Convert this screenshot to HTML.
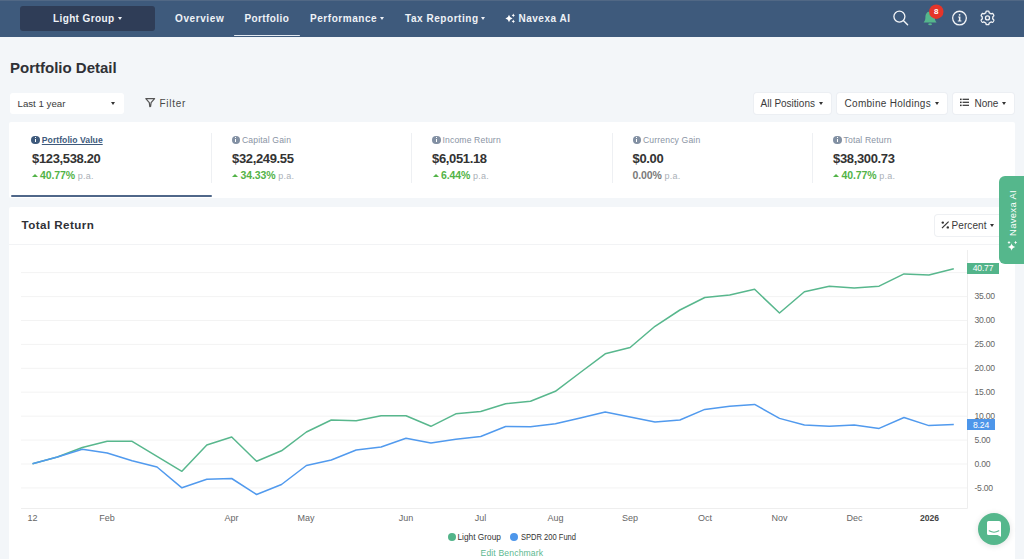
<!DOCTYPE html>
<html><head><meta charset="utf-8">
<style>
*{box-sizing:border-box;margin:0;padding:0}
html,body{width:1024px;height:559px;overflow:hidden;background:#f3f6f9;font-family:"Liberation Sans",sans-serif;position:relative}
.abs{position:absolute;white-space:nowrap}
.nav{position:absolute;left:0;top:0;width:1024px;height:37px;background:#3e5a7c;box-shadow:inset 0 1px 0 #516885}
.brand{position:absolute;left:20px;top:6px;width:135px;height:25px;background:#2f3d57;border-radius:3px}
.nl{position:absolute;top:0;height:37px;line-height:37px;color:#eef2f7;font-weight:bold;font-size:10px;letter-spacing:0.6px;white-space:nowrap}
.car{position:absolute;width:0;height:0;border-left:2.5px solid transparent;border-right:2.5px solid transparent;border-top:3px solid currentColor}
.uline{position:absolute;left:234px;top:34.5px;width:66px;height:1.75px;background:#e3e9f1;border-radius:1px}
.btn{position:absolute;background:#fff;border-radius:3px;box-shadow:0 0 0 1px #eceff3}
.t10{position:absolute;font-size:10px;color:#3a3a3a;white-space:nowrap}
.card{position:absolute;background:#fff;border-radius:2px}
.st{position:absolute;top:134.5px;font-size:8.6px;color:#8a94a4;white-space:nowrap;letter-spacing:0.15px}
.sv{position:absolute;top:151px;font-size:13px;font-weight:bold;color:#333;white-space:nowrap;letter-spacing:-0.35px}
.sp{position:absolute;top:169px;font-size:10.5px;font-weight:bold;color:#52b347;white-space:nowrap;letter-spacing:-0.1px}
.sp span{font-weight:normal;color:#aab0b7;font-size:9px;letter-spacing:0.2px}
.ic{position:absolute;top:135.5px;width:8.5px;height:8.5px;border-radius:50%;background:#8290a3}
.ic:after{content:"";position:absolute;left:3.6px;top:3.3px;width:1.4px;height:3.3px;background:#fff}
.ic:before{content:"";position:absolute;left:3.6px;top:1.5px;width:1.4px;height:1.2px;background:#fff}
.tri{position:absolute;top:173.5px;width:0;height:0;border-left:3px solid transparent;border-right:3px solid transparent;border-bottom:3px solid #52b347}
.vsep{position:absolute;top:133px;width:1px;height:50px;background:#eef0f3}
svg.chart{position:absolute;left:0;top:0}
</style></head><body>
<div class="nav">
  <div class="brand"></div>
  <div class="nl" style="left:53px;letter-spacing:0.38px">Light Group</div>
  <i class="car" style="left:117.5px;top:17px;color:#eef2f7"></i>
  <div class="nl" style="left:175px">Overview</div>
  <div class="nl" style="left:244.5px;letter-spacing:0.4px">Portfolio</div>
  <div class="nl" style="left:310px;letter-spacing:0.55px">Performance</div>
  <i class="car" style="left:380px;top:17px;color:#eef2f7"></i>
  <div class="nl" style="left:405px;letter-spacing:0.55px">Tax Reporting</div>
  <i class="car" style="left:481px;top:17px;color:#eef2f7"></i>
  <svg class="abs" style="left:504px;top:12px" width="14" height="13" viewBox="0 0 14 13">
    <path d="M5,2.8 Q5.6,5.9 8.6,6.5 Q5.6,7.1 5,10.2 Q4.4,7.1 1.4,6.5 Q4.4,5.9 5,2.8Z" fill="#fff"/>
    <path d="M9.3,1.6 Q9.6,3.1 11,3.4 Q9.6,3.7 9.3,5.2 Q9,3.7 7.6,3.4 Q9,3.1 9.3,1.6Z" fill="#fff"/>
    <path d="M9.3,7.6 Q9.6,9.1 11,9.4 Q9.6,9.7 9.3,11.2 Q9,9.7 7.6,9.4 Q9,9.1 9.3,7.6Z" fill="#fff"/>
  </svg>
  <div class="nl" style="left:518.5px;letter-spacing:0.5px">Navexa AI</div>
  <div class="uline"></div>
  <svg class="abs" style="left:880px;top:0" width="144" height="37" viewBox="880 0 144 37">
    <circle cx="899.4" cy="16.6" r="5.5" fill="none" stroke="#f2f4f7" stroke-width="1.3"/>
    <path d="M903.6,20.8 L907.6,24.8" stroke="#f2f4f7" stroke-width="1.4" stroke-linecap="round"/>
    <path d="M930.1,11.5 C926.6,11.5 925.4,14.5 925.4,17.5 C925.4,20 924.6,21.4 923.6,22.5 L936.6,22.5 C935.6,21.4 934.8,20 934.8,17.5 C934.8,14.5 933.6,11.5 930.1,11.5Z" fill="#55b78c"/>
    <ellipse cx="930.1" cy="24.3" rx="1.9" ry="1" fill="#55b78c"/>
    <circle cx="936.3" cy="11.7" r="7.2" fill="#e5352a"/>
    <text x="936.3" y="13.9" text-anchor="middle" font-family="Liberation Sans, sans-serif" font-size="8" font-weight="bold" fill="#fff">8</text>
    <circle cx="959.5" cy="18.1" r="6.85" fill="none" stroke="#f2f4f7" stroke-width="1.3"/>
    <circle cx="959.6" cy="14.8" r="0.85" fill="#f2f4f7"/>
    <path d="M958.2,16.6 L960.4,16.6 L960.4,20.6 L961.4,20.6 L961.4,21.4 L957.8,21.4 L957.8,20.6 L958.9,20.6 L958.9,17.4 L958.2,17.4Z" fill="#f2f4f7"/>
    <path transform="translate(987.5,17.9)" d="M5.30,0.00 L5.29,0.28 L5.27,0.55 L5.23,0.83 L5.33,1.13 L5.84,1.57 L6.33,2.06 L6.35,2.44 L6.21,2.77 L6.06,3.09 L5.89,3.40 L5.70,3.70 L5.50,4.00 L5.28,4.28 L4.94,4.45 L4.28,4.28 L3.65,4.05 L3.34,4.12 L3.12,4.29 L2.89,4.44 L2.65,4.59 L2.41,4.72 L2.16,4.84 L1.90,4.95 L1.68,5.18 L1.57,5.84 L1.38,6.51 L1.06,6.72 L0.71,6.76 L0.36,6.79 L0.00,6.80 L-0.36,6.79 L-0.71,6.76 L-1.06,6.72 L-1.38,6.51 L-1.57,5.84 L-1.68,5.18 L-1.90,4.95 L-2.16,4.84 L-2.41,4.72 L-2.65,4.59 L-2.89,4.44 L-3.12,4.29 L-3.34,4.12 L-3.65,4.05 L-4.28,4.28 L-4.94,4.45 L-5.28,4.28 L-5.50,4.00 L-5.70,3.70 L-5.89,3.40 L-6.06,3.09 L-6.21,2.77 L-6.35,2.44 L-6.33,2.06 L-5.84,1.57 L-5.33,1.13 L-5.23,0.83 L-5.27,0.55 L-5.29,0.28 L-5.30,0.00 L-5.29,-0.28 L-5.27,-0.55 L-5.23,-0.83 L-5.33,-1.13 L-5.84,-1.57 L-6.33,-2.06 L-6.35,-2.44 L-6.21,-2.77 L-6.06,-3.09 L-5.89,-3.40 L-5.70,-3.70 L-5.50,-4.00 L-5.28,-4.28 L-4.94,-4.45 L-4.28,-4.28 L-3.65,-4.05 L-3.34,-4.12 L-3.12,-4.29 L-2.89,-4.44 L-2.65,-4.59 L-2.41,-4.72 L-2.16,-4.84 L-1.90,-4.95 L-1.68,-5.18 L-1.57,-5.84 L-1.38,-6.51 L-1.06,-6.72 L-0.71,-6.76 L-0.36,-6.79 L-0.00,-6.80 L0.36,-6.79 L0.71,-6.76 L1.06,-6.72 L1.38,-6.51 L1.57,-5.84 L1.68,-5.18 L1.90,-4.95 L2.16,-4.84 L2.41,-4.72 L2.65,-4.59 L2.89,-4.44 L3.12,-4.29 L3.34,-4.12 L3.65,-4.05 L4.28,-4.28 L4.94,-4.45 L5.28,-4.28 L5.50,-4.00 L5.70,-3.70 L5.89,-3.40 L6.06,-3.09 L6.21,-2.77 L6.35,-2.44 L6.33,-2.06 L5.84,-1.57 L5.33,-1.13 L5.23,-0.83 L5.27,-0.55 L5.29,-0.28Z" fill="none" stroke="#f2f4f7" stroke-width="1.3" stroke-linejoin="round"/>
    <circle cx="987.5" cy="17.9" r="2" fill="none" stroke="#f2f4f7" stroke-width="1.3"/>
  </svg>
</div>
<div class="abs" style="left:10px;top:58.5px;font-size:15px;font-weight:bold;color:#2f3136">Portfolio Detail</div>

<div class="btn" style="left:10px;top:93px;width:114px;height:21px;box-shadow:none"></div>
<div class="t10" style="left:17.5px;top:97.5px;font-size:9.7px">Last 1 year</div>
<i class="car" style="left:111px;top:102px;color:#333"></i>

<svg class="abs" style="left:144px;top:97px" width="12" height="11" viewBox="0 0 12 11"><path d="M1.8,1.6 L10.6,1.6 L7.1,5.6 L6.6,9.4 L5.8,9.6 L5.3,5.6Z" fill="none" stroke="#555" stroke-width="1.2" stroke-linejoin="round"/></svg>
<div class="t10" style="left:159.5px;top:97.5px;letter-spacing:0.7px;color:#484848">Filter</div>

<div class="btn" style="left:753.5px;top:93px;width:77px;height:21px"></div>
<div class="t10" style="left:760.5px;top:97.5px">All Positions</div>
<i class="car" style="left:819px;top:102px;color:#333"></i>
<div class="btn" style="left:837px;top:93px;width:109.5px;height:21px"></div>
<div class="t10" style="left:844.5px;top:97.5px;letter-spacing:0.3px">Combine Holdings</div>
<i class="car" style="left:935px;top:102px;color:#333"></i>
<div class="btn" style="left:953px;top:93px;width:61px;height:21px"></div>
<svg class="abs" style="left:960px;top:98px" width="10" height="9" viewBox="0 0 10 9">
  <rect x="0" y="0.6" width="1.6" height="1.5" fill="#333"/><rect x="0" y="3.6" width="1.6" height="1.5" fill="#333"/><rect x="0" y="6.6" width="1.6" height="1.5" fill="#333"/>
  <rect x="2.6" y="0.7" width="6.4" height="1.2" fill="#333"/><rect x="2.6" y="3.7" width="6.4" height="1.2" fill="#333"/><rect x="2.6" y="6.7" width="6.4" height="1.2" fill="#333"/>
</svg>
<div class="t10" style="left:974.5px;top:97.5px">None</div>
<i class="car" style="left:1001.5px;top:102px;color:#333"></i>

<div class="card" style="left:9px;top:122px;width:1006px;height:75.5px"></div>
<div class="abs" style="left:11px;top:195px;width:201px;height:2px;background:#4f6789;border-radius:1px"></div>
<div class="vsep" style="left:211px"></div>
<div class="vsep" style="left:411px"></div>
<div class="vsep" style="left:612px"></div>
<div class="vsep" style="left:812px"></div>

<i class="ic" style="left:31.3px;background:#3e5a7c"></i>
<div class="st" style="left:41.8px;color:#3e5a7c;font-weight:bold;text-decoration:underline;letter-spacing:0.05px">Portfolio Value</div>
<div class="sv" style="left:32px">$123,538.20</div>
<i class="tri" style="left:31.5px"></i>
<div class="sp" style="left:40px">40.77% <span>p.a.</span></div>

<i class="ic" style="left:231.5px"></i>
<div class="st" style="left:242px">Capital Gain</div>
<div class="sv" style="left:232px">$32,249.55</div>
<i class="tri" style="left:232px"></i>
<div class="sp" style="left:240.5px">34.33% <span>p.a.</span></div>

<i class="ic" style="left:432px"></i>
<div class="st" style="left:442.5px">Income Return</div>
<div class="sv" style="left:432px">$6,051.18</div>
<i class="tri" style="left:432.5px"></i>
<div class="sp" style="left:441px">6.44% <span>p.a.</span></div>

<i class="ic" style="left:632.5px"></i>
<div class="st" style="left:643px">Currency Gain</div>
<div class="sv" style="left:632.5px">$0.00</div>
<div class="sp" style="left:632.5px;color:#7a7a7a">0.00% <span>p.a.</span></div>

<i class="ic" style="left:833px"></i>
<div class="st" style="left:843.5px">Total Return</div>
<div class="sv" style="left:833px">$38,300.73</div>
<i class="tri" style="left:833px"></i>
<div class="sp" style="left:841.5px">40.77% <span>p.a.</span></div>

<div class="card" style="left:9px;top:207px;width:1006px;height:360px"></div>
<div class="abs" style="left:21.5px;top:218px;font-size:11.6px;font-weight:bold;color:#2f3136;letter-spacing:0.45px">Total Return</div>
<div class="abs" style="left:9px;top:243.5px;width:1006px;height:1px;background:#f2f3f5"></div>
<div class="btn" style="left:935px;top:214.5px;width:70px;height:21.5px;box-shadow:0 0 0 1px #eef0f3"></div>
<svg class="abs" style="left:941px;top:221px" width="9" height="8" viewBox="0 0 9 8"><path d="M1,7.2 L7.6,0.6" stroke="#333" stroke-width="1.2"/><circle cx="1.8" cy="1.6" r="1.2" fill="#333"/><circle cx="6.8" cy="6.4" r="1.2" fill="#333"/></svg>
<div class="t10" style="left:951.5px;top:219.7px;letter-spacing:0.1px">Percent</div>
<i class="car" style="left:990px;top:224px;color:#333;border-left-width:2.8px;border-right-width:2.8px;border-top-width:3.2px"></i>

<svg class="chart" width="1024" height="559" viewBox="0 0 1024 559">
<g><line x1="21" y1="487.9" x2="967.5" y2="487.9" stroke="#f3f3f3" stroke-width="1"/>
<line x1="21" y1="464.0" x2="967.5" y2="464.0" stroke="#f3f3f3" stroke-width="1"/>
<line x1="21" y1="440.1" x2="967.5" y2="440.1" stroke="#f3f3f3" stroke-width="1"/>
<line x1="21" y1="416.2" x2="967.5" y2="416.2" stroke="#f3f3f3" stroke-width="1"/>
<line x1="21" y1="392.2" x2="967.5" y2="392.2" stroke="#f3f3f3" stroke-width="1"/>
<line x1="21" y1="368.3" x2="967.5" y2="368.3" stroke="#f3f3f3" stroke-width="1"/>
<line x1="21" y1="344.4" x2="967.5" y2="344.4" stroke="#f3f3f3" stroke-width="1"/>
<line x1="21" y1="320.5" x2="967.5" y2="320.5" stroke="#f3f3f3" stroke-width="1"/>
<line x1="21" y1="296.6" x2="967.5" y2="296.6" stroke="#f3f3f3" stroke-width="1"/>
<line x1="21" y1="272.6" x2="967.5" y2="272.6" stroke="#f3f3f3" stroke-width="1"/>
</g>
<line x1="21" y1="508.5" x2="967.5" y2="508.5" stroke="#eeeeee"/>
<line x1="967.5" y1="250" x2="967.5" y2="508.5" stroke="#eeeeee"/>
<g font-family="Liberation Sans, sans-serif" font-size="8.6" letter-spacing="-0.25" fill="#666"><text x="974.5" y="490.5">-5.00</text>
<text x="974.5" y="466.6">0.00</text>
<text x="974.5" y="442.7">5.00</text>
<text x="974.5" y="418.8">10.00</text>
<text x="974.5" y="394.8">15.00</text>
<text x="974.5" y="370.9">20.00</text>
<text x="974.5" y="347.0">25.00</text>
<text x="974.5" y="323.1">30.00</text>
<text x="974.5" y="299.2">35.00</text>
</g><g font-family="Liberation Sans, sans-serif" font-size="9" fill="#666"><text x="32.5" y="521.3" text-anchor="middle">12</text>
<text x="107" y="521.3" text-anchor="middle">Feb</text>
<text x="231.5" y="521.3" text-anchor="middle">Apr</text>
<text x="306" y="521.3" text-anchor="middle">May</text>
<text x="406" y="521.3" text-anchor="middle">Jun</text>
<text x="480.5" y="521.3" text-anchor="middle">Jul</text>
<text x="555.5" y="521.3" text-anchor="middle">Aug</text>
<text x="630" y="521.3" text-anchor="middle">Sep</text>
<text x="705" y="521.3" text-anchor="middle">Oct</text>
<text x="779.5" y="521.3" text-anchor="middle">Nov</text>
<text x="854.5" y="521.3" text-anchor="middle">Dec</text>
<text x="929.5" y="521.3" text-anchor="middle" font-weight="bold" font-size="8.6" fill="#444">2026</text>
</g>
<polyline points="32.5,463.8 57.4,457.0 82.3,447.5 107.2,441.3 132.1,441.3 157.0,456.3 181.9,471.3 206.8,445.0 231.7,437.0 256.6,461.3 281.5,450.8 306.4,432.0 331.3,420.0 356.2,420.8 381.1,415.8 406.0,415.8 430.9,426.3 455.8,413.8 480.7,411.5 505.6,403.8 530.5,401.3 555.4,391.3 580.3,372.5 605.2,353.8 630.1,347.5 655.0,326.3 679.9,310.0 704.8,297.5 729.7,295.0 754.6,289.3 779.5,313.0 804.4,291.8 829.3,286.3 854.2,287.9 879.1,286.2 904.0,273.9 928.9,275.0 953.8,268.7" fill="none" stroke="#58b78d" stroke-width="1.5" stroke-linejoin="round"/>
<polyline points="32.5,463.8 57.4,457.0 82.3,449.3 107.2,453.0 132.1,460.8 157.0,467.0 181.9,487.8 206.8,479.3 231.7,478.5 256.6,494.5 281.5,484.5 306.4,465.5 331.3,460.0 356.2,450.0 381.1,447.0 406.0,438.3 430.9,443.0 455.8,439.3 480.7,436.5 505.6,426.5 530.5,426.8 555.4,423.8 580.3,418.0 605.2,412.0 630.1,417.0 655.0,422.0 679.9,420.0 704.8,409.4 729.7,406.3 754.6,404.4 779.5,418.4 804.4,425.0 829.3,426.3 854.2,425.0 879.1,428.4 904.0,417.5 928.9,425.6 953.8,424.4" fill="none" stroke="#519aee" stroke-width="1.5" stroke-linejoin="round"/>
<rect x="967" y="263" width="32" height="11" fill="#53b48a"/>
<text x="983" y="271.4" text-anchor="middle" font-family="Liberation Sans, sans-serif" font-size="8.6" letter-spacing="-0.2" fill="#fff">40.77</text>
<rect x="967" y="419" width="28" height="11" fill="#4d96ea"/>
<text x="981" y="427.6" text-anchor="middle" font-family="Liberation Sans, sans-serif" font-size="8.6" letter-spacing="-0.2" fill="#fff">8.24</text>
</svg>

<div class="abs" style="left:448px;top:533px;width:8px;height:8px;border-radius:50%;background:#53b48a"></div>
<div class="abs" style="left:457.5px;top:532px;font-size:8.3px;color:#333">Light Group</div>
<div class="abs" style="left:510px;top:533px;width:8px;height:8px;border-radius:50%;background:#4d96ea"></div>
<div class="abs" style="left:520.5px;top:532px;font-size:8.3px;color:#333;transform:scaleX(0.91);transform-origin:0 0">SPDR 200 Fund</div>
<div class="abs" style="left:480.5px;top:547.5px;font-size:8.6px;color:#5cb890;letter-spacing:0.15px">Edit Benchmark</div>

<div class="abs" style="left:999px;top:176px;width:30px;height:88px;background:#55b78c;border-radius:6px 0 0 6px"></div>
<div class="abs" style="left:1013px;top:213px;width:0;height:0">
  <div style="position:absolute;left:-30px;top:-6px;width:60px;height:12px;line-height:12px;text-align:center;font-size:9.5px;color:#fff;transform:rotate(-90deg);letter-spacing:0.3px">Navexa AI</div>
</div>
<svg class="abs" style="left:1006px;top:240px" width="14" height="13" viewBox="0 0 14 13">
  <path d="M5.6,3.2 Q6.2,6.4 9.4,7 Q6.2,7.6 5.6,10.8 Q5,7.6 1.8,7 Q5,6.4 5.6,3.2Z" fill="#fff"/>
  <path d="M3,0.8 Q3.3,2.2 4.6,2.5 Q3.3,2.8 3,4.2 Q2.7,2.8 1.4,2.5 Q2.7,2.2 3,0.8Z" fill="#fff"/>
  <path d="M9.6,0.8 Q9.9,2.2 11.2,2.5 Q9.9,2.8 9.6,4.2 Q9.3,2.8 8,2.5 Q9.3,2.2 9.6,0.8Z" fill="#fff"/>
</svg>
<div class="abs" style="left:978px;top:513px;width:32px;height:32px;border-radius:50%;background:#55b78c;box-shadow:0 1px 6px rgba(0,0,0,0.12)"></div>
<svg class="abs" style="left:986px;top:520px" width="17" height="18" viewBox="0 0 17 18">
  <path d="M2.5,1 L13,1 Q15,1 15,3 L15,16.8 L11.5,15 L2.5,15 Q1,15 1,13.5 L1,2.5 Q1,1 2.5,1Z" fill="#fff"/>
  <path d="M3.2,10.8 Q8,13.6 12.8,10.8" fill="none" stroke="#55b78c" stroke-width="1.1" stroke-linecap="round"/>
</svg>
</body></html>
